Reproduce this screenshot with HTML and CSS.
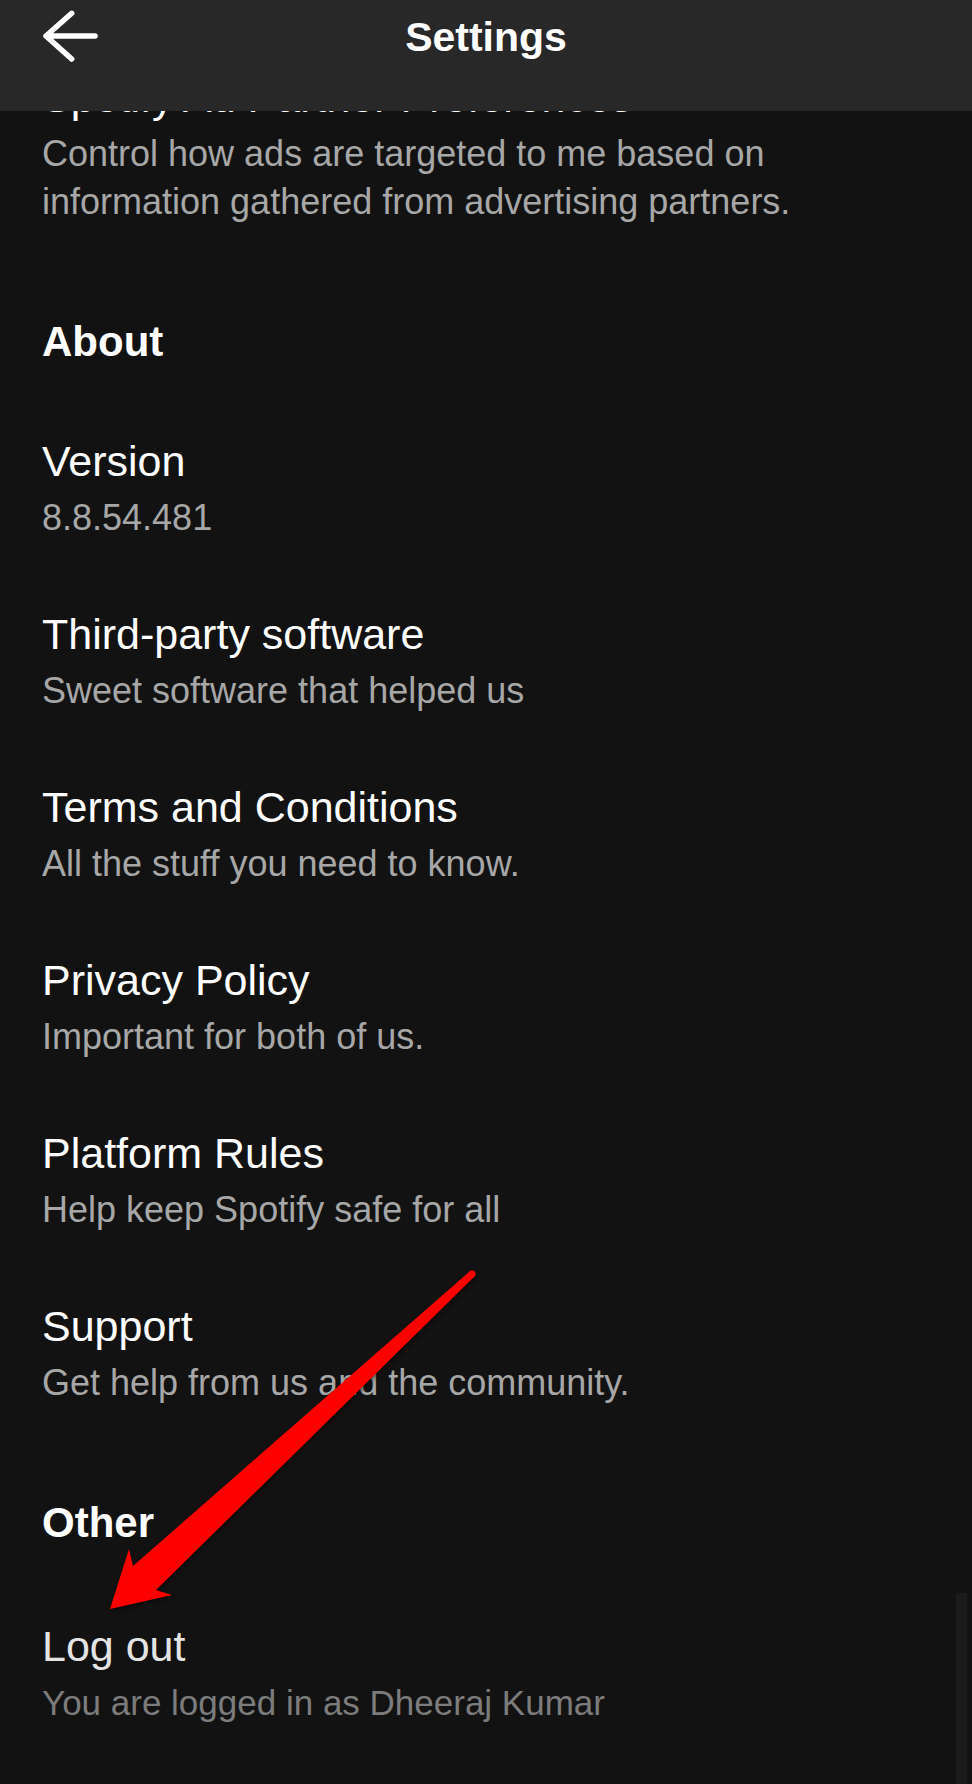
FILE: index.html
```html
<!DOCTYPE html>
<html lang="en">
<head>
    <meta charset="UTF-8">
    <meta name="viewport" content="width=device-width, initial-scale=1.0">
    <title>Settings</title>
    <link rel="stylesheet" href="styles.css">
</head>
<body>

<div class="screen">
    <header class="topbar">
        <button class="back" aria-label="Back">
            <svg viewBox="0 0 60 60" width="60" height="60">
                <path d="M55 30H6M31.7 7.3L6 30l25.7 23" fill="none" stroke="#fff" stroke-width="5.5" stroke-linecap="round" stroke-linejoin="round"/>
            </svg>
        </button>
        <h1 class="topbar-title">Settings</h1>
        <span></span>
    </header>

    <div class="viewport">
        <div class="settings-list">
            <div class="setting">
                <div class="setting-title">Spotify Ad Partner Preferences</div>
                <div class="setting-desc">Control how ads are targeted to me based on information gathered from advertising partners.</div>
            </div>

            <section class="group">
                <h2 class="group-title">About</h2>
                <div class="setting">
                    <div class="setting-title">Version</div>
                    <div class="setting-desc">8.8.54.481</div>
                </div>
                <div class="setting">
                    <div class="setting-title">Third-party software</div>
                    <div class="setting-desc">Sweet software that helped us</div>
                </div>
                <div class="setting">
                    <div class="setting-title">Terms and Conditions</div>
                    <div class="setting-desc">All the stuff you need to know.</div>
                </div>
                <div class="setting">
                    <div class="setting-title">Privacy Policy</div>
                    <div class="setting-desc">Important for both of us.</div>
                </div>
                <div class="setting">
                    <div class="setting-title">Platform Rules</div>
                    <div class="setting-desc">Help keep Spotify safe for all</div>
                </div>
                <div class="setting">
                    <div class="setting-title">Support</div>
                    <div class="setting-desc">Get help from us and the community.</div>
                </div>
            </section>

            <section class="group">
                <h2 class="group-title">Other</h2>
                <div class="setting setting-muted">
                    <div class="setting-title">Log out</div>
                    <div class="setting-desc">You are logged in as Dheeraj Kumar</div>
                </div>
            </section>
        </div>

        <div class="scroll-thumb"></div>
    </div>

    <!-- red pointer to the log out row -->
    <svg class="callout" viewBox="100 1260 380 360" width="380" height="360">
        <circle cx="472" cy="1274" r="3.6" fill="#ff0000"/>
        <polygon points="469.6,1271.4 133,1566 129,1549 110,1609 172,1595 156,1590 474.4,1276.6" fill="#ff0000"/>
    </svg>
</div>

</body>
</html>
```

FILE: styles.css
```css
* {
    box-sizing: border-box;
}

body {
    margin: 0;
    background-color: #121212;
    color: #fff;
    font-family: "Liberation Sans", Arial, sans-serif;
}

.screen {
    position: relative;
    width: 972px;
    height: 1784px;
    overflow: hidden;
}

/* top bar */
.topbar {
    height: 111px;
    background-color: #282828;
    display: grid;
    grid-template-columns: 1fr auto 1fr;
    align-items: start;
    padding: 6px 40px 0;
}

.back {
    display: block;
    width: 60px;
    height: 60px;
    padding: 0;
    border: none;
    background: none;
    cursor: pointer;
}

.back svg {
    display: block;
}

.topbar-title {
    margin: 6px 0 0;
    font-size: 41px;
    line-height: 50px;
    font-weight: 700;
}

/* scrolling list */
.viewport {
    position: relative;
    height: 1673px;
    overflow: hidden;
}

.settings-list {
    margin-top: -39px;
    padding: 0 42px;
}

.setting + .setting {
    margin-top: 67px;
}

.setting-title {
    font-size: 43px;
    line-height: 50px;
}

.setting-desc {
    margin-top: 8px;
    max-width: 790px;
    font-size: 36px;
    line-height: 48px;
    color: #a7a7a7;
}

.setting-muted {
    padding-top: 4px;
}

.setting-muted .setting-title {
    color: #e4e4e4;
}

.setting-muted .setting-desc {
    font-size: 35px;
    color: #7c7c7c;
}

.group {
    margin-top: 91px;
}

.group-title {
    margin: 0 0 69px;
    font-size: 42px;
    line-height: 50px;
    font-weight: 700;
}

.scroll-thumb {
    position: absolute;
    right: 5px;
    bottom: 0;
    width: 11px;
    height: 191px;
    background-color: #1b1b1b;
}

.callout {
    position: absolute;
    left: 100px;
    top: 1260px;
    pointer-events: none;
    filter: drop-shadow(1px 2px 2px rgba(0, 0, 0, 0.5));
}
```
